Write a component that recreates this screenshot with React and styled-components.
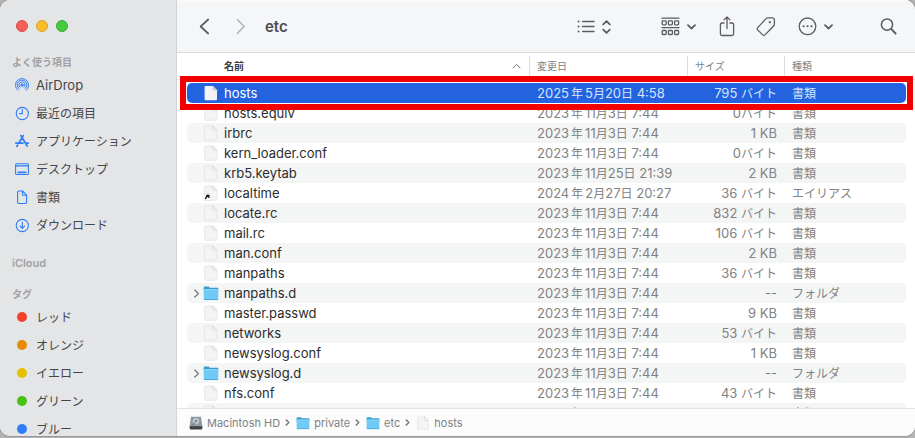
import React from "react";
import styled, { createGlobalStyle } from "styled-components";

const GlobalStyle = createGlobalStyle`
  * { box-sizing: border-box; }
  body {
    margin: 0;
    background: #b4b4b4;
    font-family: Inter, "Noto Sans CJK JP", sans-serif;
    font-size: 13px;
  }
  button { font: inherit; color: inherit; }
  ul, ol { list-style: none; margin: 0; padding: 0; }
`;

const Desktop = styled.div`
  height: 100vh;
  padding-bottom: 2px;
  overflow: hidden;
`;

const Window = styled.div`
  display: flex;
  height: 100%;
  overflow: hidden;
  border-radius: 10px;
  background: #fff;
  box-shadow: 0 0 0 1px #999;
`;

const Sidebar = styled.aside`
  flex: 0 0 177px;
  overflow: hidden;
  padding: 20px 12px 0;
  background: #e4e5e7;
  border-right: 1px solid #d3d4d6;
`;

const TrafficLights = styled.div`
  display: flex;
  gap: 8px;
  padding-left: 4px;
  margin-bottom: 21px;
`;

const Light = styled.button`
  width: 12px;
  height: 12px;
  padding: 0;
  border: 1px solid ${(p) => p.$edge};
  border-radius: 50%;
  background: ${(p) => p.$fill};
`;

const Section = styled.section`
  margin-bottom: ${(p) => p.$gap || 0}px;
`;

const SectionTitle = styled.h2`
  margin: 0;
  font-size: ${(p) => (p.$latin ? 11 : 10)}px;
  font-weight: 600;
  line-height: 18px;
  color: #a0a1a3;
`;

const SideLink = styled.a`
  display: flex;
  align-items: center;
  gap: 6px;
  height: 28px;
  padding-left: 2px;
  color: #454647;
  text-decoration: none;
  white-space: nowrap;

  svg { flex: none; width: 16px; height: 16px; color: #2f7df6; }
`;

const TagDot = styled.span`
  flex: none;
  width: 10px;
  height: 10px;
  margin: 0 3px;
  border-radius: 50%;
  background: ${(p) => p.$color};
`;

const Main = styled.main`
  display: flex;
  flex: 1;
  flex-direction: column;
  min-width: 0;
`;

const Toolbar = styled.header`
  display: flex;
  flex: none;
  align-items: center;
  height: 53px;
  padding: 0 18px 0 18px;
  background: #f5f6f8;
  border-top: 1px solid #fbfbfc;
  border-bottom: 1px solid #d9dadc;
  color: #5c5d5f;
`;

const ToolButton = styled.button`
  display: flex;
  align-items: center;
  gap: 7px;
  margin-left: ${(p) => p.$before || 0}px;
  padding: 0;
  border: 0;
  background: none;

  &:disabled { color: #b0b1b3; }
`;

const Title = styled.h1`
  flex: 1;
  margin: 0 0 0 16px;
  font-size: 15px;
  font-weight: 600;
  color: #4b4c4e;
`;

const ListArea = styled.div`
  position: relative;
  flex: 1;
  min-height: 0;
  overflow: hidden;
  padding: 0 9px 0 10px;
  background: linear-gradient(#e6e6e7, #e6e6e7) 0 26px / 100% 1px no-repeat #fff;
`;

const FileTable = styled.table`
  width: 100%;
  table-layout: fixed;
  border-collapse: separate;
  border-spacing: 0;
`;

const Col = styled.col`
  width: ${(p) => p.$width}px;
`;

const HeadCell = styled.th`
  height: 30px;
  padding: 3px 0 7px;
  text-align: left;
  font-size: 10px;
  line-height: 20px;
  font-weight: ${(p) => (p.$active ? 600 : 400)};
  color: ${(p) => (p.$active ? "#3a3b3c" : "#808182")};
`;

const HeadLabel = styled.div`
  display: flex;
  align-items: center;
  justify-content: space-between;
  height: 20px;
  padding: 0 8px 0 ${(p) => (p.$active ? 36 : 7)}px;
  border-left: 1px solid ${(p) => (p.$active ? "transparent" : "#dededf")};
`;

const Row = styled.tr`
  color: ${(p) => (p.$selected ? "#d7e4fc" : "#808283")};

  td {
    height: 20px;
    padding: 0 7px 0 8px;
    line-height: 20px;
    white-space: nowrap;
    background: ${(p) => (p.$selected ? "#2363e0" : p.$striped ? "#f4f5f5" : "#fff")};
  }
  td:first-child { padding: 0 0 0 5px; border-radius: 5px 0 0 5px; }
  td:last-child { border-radius: 0 5px 5px 0; }
`;

const NameBox = styled.div`
  display: flex;
  align-items: center;
  height: 20px;
  color: ${(p) => (p.$selected ? "#fff" : "#2b2c2d")};
`;

const Disclosure = styled.button`
  display: flex;
  width: 11px;
  padding: 0;
  border: 0;
  background: none;
  color: #77787a;
`;

const Indent = styled.span`
  width: 11px;
`;

const FileName = styled.span`
  margin-left: 5px;
`;

const SizeCell = styled.td`
  text-align: right;
`;

const Jp = styled.span`
  font-family: "Noto Sans CJK JP", sans-serif;
  font-size: 12px;
  line-height: 1;
  margin: 0 ${(p) => (p.$spaced ? 2 : 0)}px;
`;

const Callout = styled.div`
  position: absolute;
  top: 23px;
  left: 3px;
  right: 2px;
  height: 34px;
  border: 6px solid #f20000;
  pointer-events: none;
`;

const PathBar = styled.nav`
  flex: none;
  height: 28px;
  padding: 0 12px;
  border-top: 1px solid #e3e3e3;
  background: #fcfcfc;
`;

const Crumbs = styled.ol`
  display: flex;
  align-items: center;
  gap: 6px;
  height: 27px;
`;

const Crumb = styled.li`
  display: flex;
  align-items: center;
  gap: 5px;
  color: #717273;
`;

const CrumbLink = styled.a`
  display: flex;
  align-items: center;
  gap: 4px;
  font-size: 11px;
  line-height: 14px;
  white-space: nowrap;
  color: #808182;
  text-decoration: none;
`;

function Mixed({ text }) {
  return text
    .split(/([\u3040-\u30ff\u4e00-\u9fff]+)/)
    .filter(Boolean)
    .map((part, i) =>
      /[\u3040-\u9fff]/.test(part) ? (
        <Jp key={i} $spaced={part === "年"}>{part}</Jp>
      ) : (
        <React.Fragment key={i}>{part}</React.Fragment>
      )
    );
}

function Stroke({ w, h, width = 1.3, children, ...rest }) {
  return (
    <svg width={w} height={h} viewBox={`0 0 ${w} ${h}`} fill="none" stroke="currentColor"
      strokeWidth={width} strokeLinecap="round" strokeLinejoin="round" aria-hidden="true" {...rest}>
      {children}
    </svg>
  );
}

const ChevronDown = () => <Stroke w={9} h={6} width={1.8}><path d="M1 1.2l3.5 3.3L8 1.2" /></Stroke>;

const AirDropIcon = () => (
  <Stroke w={16} h={16} width={1}>
    <path d="M3.8 13.3a6.6 6.6 0 1 1 8.4 0" />
    <path d="M4.9 11.6a4.8 4.8 0 1 1 6.2 0" />
    <path d="M6 10.2a3 3 0 1 1 4 0" />
    <circle cx="8" cy="8.1" r="1.1" fill="currentColor" />
    <path d="M8 10l-2.4 4.4h4.8z" fill="#e4e5e7" stroke="none" />
  </Stroke>
);

const ClockIcon = () => (
  <Stroke w={16} h={16} width={1.1}>
    <circle cx="8.3" cy="8.5" r="6.1" />
    <path d="M8.3 4.6v4H5.4" />
  </Stroke>
);

const AppsIcon = () => (
  <Stroke w={16} h={16} width={1.8}>
    <path d="M9.3 2.6L4.9 9.9M6.9 2.6l4.4 7.3 1.9 3.2M3.6 12.2l-.6 1M1.9 10.1h7M11.9 10.1h2.3" />
  </Stroke>
);

const DesktopIcon = () => (
  <Stroke w={16} h={16} width={1.1}>
    <rect x="1.6" y="2.7" width="12.8" height="10.8" rx="1" />
    <path d="M1.8 4.9h12.4" />
    <path d="M4.4 11.4h7.2" strokeWidth="1.8" />
  </Stroke>
);

const DocumentIcon = () => (
  <Stroke w={16} h={16} width={1.1}>
    <path d="M4.8 2h3.7l4.1 4.2v7.1a1.2 1.2 0 0 1-1.2 1.2H4.8a1.2 1.2 0 0 1-1.2-1.2V3.2A1.2 1.2 0 0 1 4.8 2z" />
    <path d="M8.4 2.2v3a1.1 1.1 0 0 0 1.1 1.1h3" />
  </Stroke>
);

const DownloadIcon = () => (
  <Stroke w={16} h={16} width={1.1}>
    <circle cx="8.3" cy="8.5" r="6.1" />
    <path d="M8.3 5.3v6M6.1 9.2l2.2 2.2 2.2-2.2" />
  </Stroke>
);

function FolderIcon({ size = 16 }) {
  return (
    <svg width={size} height={size} viewBox="0 0 16 16" aria-hidden="true">
      <path d="M.7 2.500q0-1 1-1h3.800l1.300 1.200h7.500q1 0 1 1v2H.7z" fill="#3b9ccb" />
      <rect x=".7" y="4" width="14.600" height="10.900" rx=".8" fill="#6fcaf6" />
      <path d="M.7 4.700h14.600" stroke="#8ad8fb" strokeWidth="1" />
      <path d="M1 14.500h14" stroke="#49a9d8" strokeWidth="1" />
    </svg>
  );
}

function FileIcon({ selected, alias, size = 16 }) {
  return (
    <svg width={size} height={size} viewBox="0 0 16 16" aria-hidden="true">
      <path d="M2.600 1h7.200l4.200 4.200v9q0 1-1 1H2.600q-1 0-1-1V2q0-1 1-1z"
        fill={selected ? "#f2f3f5" : "#f4f4f4"} stroke={selected ? "none" : "#e0e0e0"} strokeWidth=".7" />
      <path d="M9.800 1v3.200q0 1 1 1H14z" fill={selected ? "#c4cad6" : "#fafafa"} stroke="#cacaca" strokeWidth=".6" />
      {alias && (
        <g>
          <rect x="1" y="9" width="6.400" height="6.600" rx="1" fill="#fff" stroke="#ccc" strokeWidth=".4" />
          <path d="M2.600 14.200q-.3-2 2.600-3.400M3.200 10.500h2.600v2.600" fill="none" stroke="#111" strokeWidth="1.300" />
        </g>
      )}
    </svg>
  );
}

const DriveIcon = () => (
  <svg width="14" height="14" viewBox="0 0 14 14" aria-hidden="true">
    <path d="M2 .8h10l1.3 9.2H.7z" fill="#8e979e" />
    <circle cx="7" cy="5.2" r="3.3" fill="#b9c4cb" />
    <circle cx="7" cy="5" r="1" fill="#6c757b" />
    <path d="M4 9l2.2-2.6" stroke="#626a70" strokeWidth="1" />
    <rect x=".7" y="9.4" width="12.6" height="4" rx=".8" fill="#3f4346" />
    <path d="M.9 9.7h12.2" stroke="#cfd4d7" strokeWidth=".6" />
  </svg>
);

const favorites = [
  ["AirDrop", AirDropIcon],
  ["最近の項目", ClockIcon],
  ["アプリケーション", AppsIcon],
  ["デスクトップ", DesktopIcon],
  ["書類", DocumentIcon],
  ["ダウンロード", DownloadIcon],
];

const tags = [
  ["レッド", "#f2402a"],
  ["オレンジ", "#e58b05"],
  ["イエロー", "#e5bf00"],
  ["グリーン", "#47c112"],
  ["ブルー", "#2f7dfa"],
];

const D = "2023年11月3日 7:44";
const files = [
  ["hosts", "2025年5月20日 4:58", "795 バイト", "書類"],
  ["hosts.equiv", D, "0バイト", "書類"],
  ["irbrc", D, "1 KB", "書類"],
  ["kern_loader.conf", D, "0バイト", "書類"],
  ["krb5.keytab", "2023年11月25日 21:39", "2 KB", "書類"],
  ["localtime", "2024年2月27日 20:27", "36 バイト", "エイリアス"],
  ["locate.rc", D, "832 バイト", "書類"],
  ["mail.rc", D, "106 バイト", "書類"],
  ["man.conf", D, "2 KB", "書類"],
  ["manpaths", D, "36 バイト", "書類"],
  ["manpaths.d", D, "--", "フォルダ"],
  ["master.passwd", D, "9 KB", "書類"],
  ["networks", D, "53 バイト", "書類"],
  ["newsyslog.conf", D, "1 KB", "書類"],
  ["newsyslog.d", D, "--", "フォルダ"],
  ["nfs.conf", D, "43 バイト", "書類"],
  ["nanorc", D, "43 バイト", "書類"],
];

const crumbs = [
  ["Macintosh HD", <DriveIcon />],
  ["private", <FolderIcon size={14} />],
  ["etc", <FolderIcon size={14} />],
  ["hosts", <FileIcon size={14} />],
];

function FileRow({ file, index }) {
  const [name, date, size, kind] = file;
  const selected = index === 0;
  const folder = kind === "フォルダ";
  return (
    <Row $selected={selected} $striped={index % 2 === 0} aria-selected={selected}>
      <td>
        <NameBox $selected={selected}>
          {folder ? (
            <Disclosure aria-label={name}>
              <Stroke w={9} h={9} width={1.3}><path d="M2.8 1l3.6 3.5L2.8 8" /></Stroke>
            </Disclosure>
          ) : <Indent />}
          {folder ? <FolderIcon /> : <FileIcon selected={selected} alias={kind === "エイリアス"} />}
          <FileName>{name}</FileName>
        </NameBox>
      </td>
      <td><Mixed text={date} /></td>
      <SizeCell><Mixed text={size} /></SizeCell>
      <td><Mixed text={kind} /></td>
    </Row>
  );
}

export default function App() {
  return (
    <Desktop>
      <GlobalStyle />
      <Window>
        <Sidebar>
          <TrafficLights>
            <Light $fill="#f65f57" $edge="#de4c45" aria-label="閉じる" />
            <Light $fill="#f9bd2e" $edge="#dfa023" aria-label="しまう" />
            <Light $fill="#48c83f" $edge="#34ae2d" aria-label="拡大" />
          </TrafficLights>
          <Section $gap={15}>
            <SectionTitle>よく使う項目</SectionTitle>
            <ul>
              {favorites.map(([label, Icon]) => (
                <li key={label}><SideLink href="#"><Icon /><span><Mixed text={label} /></span></SideLink></li>
              ))}
            </ul>
          </Section>
          <Section $gap={13}>
            <SectionTitle $latin>iCloud</SectionTitle>
          </Section>
          <Section>
            <SectionTitle>タグ</SectionTitle>
            <ul>
              {tags.map(([label, color]) => (
                <li key={label}><SideLink href="#"><TagDot $color={color} /><span><Mixed text={label} /></span></SideLink></li>
              ))}
            </ul>
          </Section>
        </Sidebar>
        <Main>
          <Toolbar>
            <ToolButton aria-label="戻る">
              <Stroke w={18} h={18} width={1.7}><path d="M13.2 1.500L5.600 8.500l7.600 7" /></Stroke>
            </ToolButton>
            <ToolButton $before={18} disabled aria-label="進む">
              <Stroke w={18} h={18} width={1.5}><path d="M6.500 1.700l6.600 6.800-6.600 6.800" /></Stroke>
            </ToolButton>
            <Title>etc</Title>
            <ToolButton aria-label="リスト表示">
              <Stroke w={18} h={14} width={1.4}>
                <path d="M5.6 1.500h11.400M5.6 6.500h11.400M5.6 11.500h11.400" />
                <path d="M1.5 1.500h.1M1.5 6.500h.1M1.5 11.500h.1" strokeWidth="1.8" />
              </Stroke>
              <Stroke w={9} h={14} width={1.8}><path d="M1.2 4.400L4.500 1.200l3.300 3.200M1.200 9.600l3.300 3.200 3.300-3.200" /></Stroke>
            </ToolButton>
            <ToolButton $before={50} aria-label="グループ">
              <Stroke w={19} h={20} width={1.3}>
                <path d="M1 1.200h17M1 10.700h17" />
                <rect x="1.2" y="3.8" width="4" height="4" rx=".8" />
                <rect x="7.4" y="3.8" width="4" height="4" rx=".8" />
                <rect x="13.6" y="3.8" width="4" height="4" rx=".8" />
                <rect x="1.2" y="13.5" width="4" height="4" rx=".8" />
                <rect x="7.4" y="13.5" width="4" height="4" rx=".8" />
                <rect x="13.6" y="13.5" width="4" height="4" rx=".8" />
              </Stroke>
              <ChevronDown />
            </ToolButton>
            <ToolButton $before={23} aria-label="共有">
              <Stroke w={16} h={22} width={1.3}>
                <path d="M5 7H3.200a1.800 1.800 0 0 0-1.800 1.800v8.900a1.800 1.800 0 0 0 1.800 1.800h9.600a1.800 1.800 0 0 0 1.800-1.800V8.800a1.800 1.800 0 0 0-1.800-1.800H11M8 12.500V1.100M5 3.900l3-2.900 3 2.900" />
              </Stroke>
            </ToolButton>
            <ToolButton $before={21} aria-label="タグを編集">
              <Stroke w={20} h={20} width={1.3}>
                <path d="M11.700 .8h4.700a2 2 0 0 1 2 2v4.600a2 2 0 0 1-.6 1.400l-8.800 9.100a1.600 1.600 0 0 1-2.300 0l-5-5a1.600 1.600 0 0 1 0-2.300l8.600-9.200a2 2 0 0 1 1.400-.6z" />
                <circle cx="13.800" cy="5.200" r=".8" fill="currentColor" strokeWidth=".8" />
              </Stroke>
            </ToolButton>
            <ToolButton $before={22} aria-label="その他">
              <Stroke w={19} h={19} width={1.3}>
                <circle cx="9.500" cy="9.300" r="8.300" />
                <path d="M5.500 9.300h.1M9.500 9.300h.1M13.400 9.300h.1" strokeWidth="2.100" />
              </Stroke>
              <ChevronDown />
            </ToolButton>
            <ToolButton $before={46} aria-label="検索">
              <Stroke w={18} h={18} width={1.5}>
                <circle cx="8" cy="6.600" r="5.600" />
                <path d="M12.200 10.900l4.400 4.600" strokeWidth="1.900" />
              </Stroke>
            </ToolButton>
          </Toolbar>
          <ListArea>
            <FileTable>
              <colgroup>
                <col />
                <Col $width={158} />
                <Col $width={97} />
                <Col $width={122} />
              </colgroup>
              <thead>
                <tr>
                  <HeadCell $active aria-sort="ascending">
                    <HeadLabel $active>
                      名前
                      <Stroke w={9} h={6} width={1} color="#77787a"><path d="M1 5l3.500-3.700L8 5" /></Stroke>
                    </HeadLabel>
                  </HeadCell>
                  <HeadCell><HeadLabel>変更日</HeadLabel></HeadCell>
                  <HeadCell><HeadLabel>サイズ</HeadLabel></HeadCell>
                  <HeadCell><HeadLabel>種類</HeadLabel></HeadCell>
                </tr>
              </thead>
              <tbody>
                {files.map((file, i) => <FileRow key={file[0]} file={file} index={i} />)}
              </tbody>
            </FileTable>
            <Callout />
          </ListArea>
          <PathBar aria-label="パスバー">
            <Crumbs>
              {crumbs.map(([label, icon], i) => (
                <Crumb key={label}>
                  <CrumbLink href="#">{icon}{label}</CrumbLink>
                  {i < crumbs.length - 1 && <Stroke w={5} h={7} width={1.4}><path d="M1.200 1l2.600 2.500L1.200 6" /></Stroke>}
                </Crumb>
              ))}
            </Crumbs>
          </PathBar>
        </Main>
      </Window>
    </Desktop>
  );
}
